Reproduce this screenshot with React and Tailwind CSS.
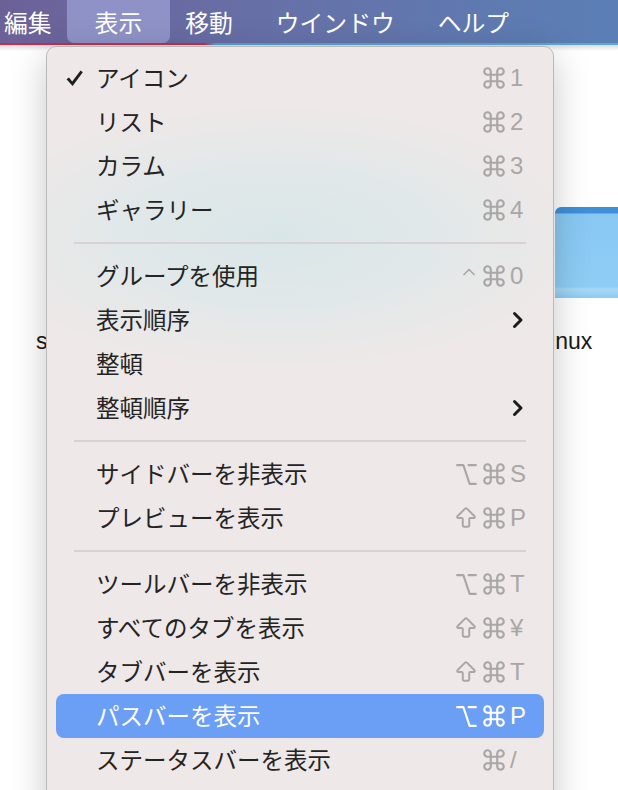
import React from 'react';
import { Command, Option, ArrowBigUp, ChevronUp } from 'lucide-react';

const jp = "font-['Noto_Sans_CJK_JP','Noto_Sans',sans-serif]";

const sections = [
  [
    { label: 'アイコン', check: true, mods: ['cmd'], key: '1' },
    { label: 'リスト', mods: ['cmd'], key: '2' },
    { label: 'カラム', mods: ['cmd'], key: '3' },
    { label: 'ギャラリー', mods: ['cmd'], key: '4' },
  ],
  [
    { label: 'グループを使用', mods: ['ctrl', 'cmd'], key: '0' },
    { label: '表示順序', sub: true },
    { label: '整頓' },
    { label: '整頓順序', sub: true },
  ],
  [
    { label: 'サイドバーを非表示', mods: ['opt', 'cmd'], key: 'S' },
    { label: 'プレビューを表示', mods: ['shift', 'cmd'], key: 'P' },
  ],
  [
    { label: 'ツールバーを非表示', mods: ['opt', 'cmd'], key: 'T' },
    { label: 'すべてのタブを表示', mods: ['shift', 'cmd'], key: '¥' },
    { label: 'タブバーを表示', mods: ['shift', 'cmd'], key: 'T' },
    { label: 'パスバーを表示', mods: ['opt', 'cmd'], key: 'P', active: true },
    { label: 'ステータスバーを表示', mods: ['cmd'], key: '/' },
  ],
];

const Mod = ({ name }) => {
  if (name === 'cmd') return <Command size={26} strokeWidth={2} />;
  if (name === 'opt') return <Option size={25} strokeWidth={2} />;
  if (name === 'shift') return <ArrowBigUp size={26} strokeWidth={1.8} />;
  return <ChevronUp size={20} strokeWidth={2} className="-mt-[8px]" />;
};

const Check = () => (
  <svg width="19" height="19" viewBox="0 0 19 19" className="text-[#1f1f1f]">
    <path d="M1.5 10.2 L4 8.4 L7.2 12.4 L15.6 1.6 L17.8 3.2 L7.6 17 Z" fill="currentColor" />
  </svg>
);

const Chevron = () => (
  <svg width="12" height="18" viewBox="0 0 12 18">
    <path d="M2.5 2.5 L9 9 L2.5 15.5" fill="none" stroke="#1c1c1c" strokeWidth="3" strokeLinecap="round" strokeLinejoin="round" />
  </svg>
);

const MenuRow = ({ item }) => {
  const on = item.active;
  return (
    <div
      className={`mx-[9px] h-[44px] flex items-center rounded-[8px] ${on ? 'bg-[#6b9ef5] text-white' : 'text-[#242424]'}`}
    >
      <div className="w-[40px] flex justify-end pr-[12px]">{item.check && <Check />}</div>
      <div className={`flex-1 text-[23.5px] leading-none ${jp}`}>{item.label}</div>
      <div className="flex items-center">
        {item.sub && (
          <div className="pr-[20px]">
            <Chevron />
          </div>
        )}
        {item.key && (
          <div className={`flex items-center pr-[17px] ${on ? 'text-white' : 'text-[#aaa6a6]'}`}>
            <div className="flex items-center gap-[2px]">
              {item.mods.map((m, i) => (
                <Mod key={i} name={m} />
              ))}
            </div>
            <span className="w-[17px] ml-[3px] text-[24px] leading-none font-['Liberation_Sans','DejaVu_Sans',sans-serif]">
              {item.key}
            </span>
          </div>
        )}
      </div>
    </div>
  );
};

export default function App() {
  return (
    <div className="relative w-[618px] h-[790px] overflow-hidden bg-white">
      {/* menu bar */}
      <div className="h-[43px] flex items-center pl-[4px] gap-[43px] bg-[linear-gradient(90deg,#6c6197,#6671a8_45%,#5a7fb6)] text-white text-[23.8px] leading-none">
        <span className={jp}>編集</span>
        <span className={`${jp} h-[43px] flex items-center -mx-[28px] px-[28px] rounded-b-[7px] bg-[#8f92c6]`}>表示</span>
        <span className={jp}>移動</span>
        <span className={jp}>ウインドウ</span>
        <span className={jp}>ヘルプ</span>
      </div>
      <div className="h-[2px] bg-[linear-gradient(90deg,#c3304f_0px,#c3304f_205px,#4fa3cf_215px,#5aa7d8)]" />
      <div className="h-[6px] bg-[linear-gradient(180deg,#dcdcdc,#ffffff)]" />

      {/* finder content behind the menu */}
      <div className="absolute left-[555px] top-[207px] w-[80px] h-[91px] rounded-tl-[6px] bg-[linear-gradient(180deg,#3f8fd9_0px,#3f8fd9_6px,#88c8f3_7px,#8fcdf5_80px,#a9d9f6_82px,#8ccaf3_91px)]" />
      <div className="absolute left-[36px] top-[330px] text-[23px] leading-none text-[#1a1a1a] font-['Liberation_Sans',sans-serif]">sbin</div>
      <div className="absolute left-[545px] top-[330px] text-[23px] leading-none text-[#1a1a1a] font-['Liberation_Sans',sans-serif]">linux</div>

      {/* dropdown menu */}
      <div className="absolute left-[46px] top-[46px] w-[508px] h-[800px] rounded-[10px] border border-[#bdb8b8] shadow-[0_10px_36px_rgba(0,0,0,0.22)] bg-[radial-gradient(ellipse_300px_130px_at_230px_190px,#d9e6e8_0%,#e2e8e9_55%,#eee8e8_100%)] pt-[9px]">
        {sections.map((sec, si) => (
          <div key={si}>
            {si > 0 && (
              <div className="h-[22px] flex items-center px-[27px]">
                <div className="h-[2px] w-full bg-[#d8d2d2]" />
              </div>
            )}
            {sec.map((it, i) => (
              <MenuRow key={i} item={it} />
            ))}
          </div>
        ))}
      </div>
    </div>
  );
}
